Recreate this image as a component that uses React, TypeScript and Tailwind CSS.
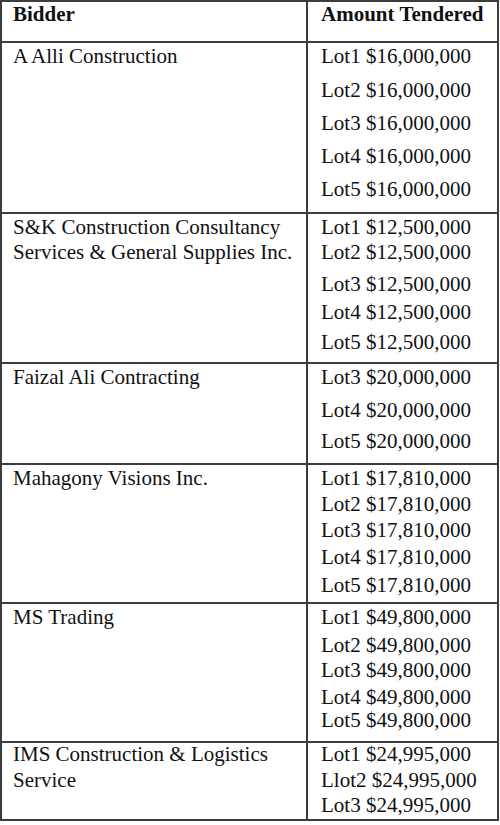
type Line = { text: string; cls: string };

type Row = {
  bidder: Line[];
  amounts: Line[];
  height: string;
};

const rows: Row[] = [
  {
    height: 'h-[171px]',
    bidder: [{ text: 'A Alli Construction', cls: 'mt-[1px]' }],
    amounts: [
      { text: 'Lot1 $16,000,000', cls: 'mt-[1px]' },
      { text: 'Lot2 $16,000,000', cls: 'mt-[10px]' },
      { text: 'Lot3 $16,000,000', cls: 'mt-[9px]' },
      { text: 'Lot4 $16,000,000', cls: 'mt-[9px]' },
      { text: 'Lot5 $16,000,000', cls: 'mt-[9px]' },
    ],
  },
  {
    height: 'h-[150px]',
    bidder: [
      { text: 'S&K Construction Consultancy', cls: 'mt-[1px]' },
      { text: 'Services & General Supplies Inc.', cls: 'mt-[1px]' },
    ],
    amounts: [
      { text: 'Lot1 $12,500,000', cls: 'mt-[1px]' },
      { text: 'Lot2 $12,500,000', cls: 'mt-[1px]' },
      { text: 'Lot3 $12,500,000', cls: 'mt-[8px]' },
      { text: 'Lot4 $12,500,000', cls: 'mt-[4px]' },
      { text: 'Lot5 $12,500,000', cls: 'mt-[6px]' },
    ],
  },
  {
    height: 'h-[101px]',
    bidder: [{ text: 'Faizal Ali Contracting', cls: 'mt-[1px]' }],
    amounts: [
      { text: 'Lot3 $20,000,000', cls: 'mt-[1px]' },
      { text: 'Lot4 $20,000,000', cls: 'mt-[9px]' },
      { text: 'Lot5 $20,000,000', cls: 'mt-[7px]' },
    ],
  },
  {
    height: 'h-[139px]',
    bidder: [{ text: 'Mahagony Visions Inc.', cls: 'mt-[1px]' }],
    amounts: [
      { text: 'Lot1 $17,810,000', cls: 'mt-[1px]' },
      { text: 'Lot2 $17,810,000', cls: 'mt-[2px]' },
      { text: 'Lot3 $17,810,000', cls: 'mt-[2px]' },
      { text: 'Lot4 $17,810,000', cls: 'mt-[3px]' },
      { text: 'Lot5 $17,810,000', cls: 'mt-[4px]' },
    ],
  },
  {
    height: 'h-[139px]',
    bidder: [{ text: 'MS Trading', cls: 'mt-[1px]' }],
    amounts: [
      { text: 'Lot1 $49,800,000', cls: 'mt-[1px]' },
      { text: 'Lot2 $49,800,000', cls: 'mt-[4px]' },
      { text: 'Lot3 $49,800,000', cls: 'mt-[1px]' },
      { text: 'Lot4 $49,800,000', cls: 'mt-[3px]' },
      { text: 'Lot5 $49,800,000', cls: 'mt-[-1px]' },
    ],
  },
  {
    height: 'h-[78px]',
    bidder: [
      { text: 'IMS Construction & Logistics', cls: 'mt-[-1px]' },
      { text: 'Service', cls: 'mt-[2px]' },
    ],
    amounts: [
      { text: 'Lot1 $24,995,000', cls: 'mt-[-1px]' },
      { text: 'Llot2 $24,995,000', cls: 'mt-[2px]' },
      { text: 'Lot3 $24,995,000', cls: 'mt-[1px]' },
    ],
  },
];

function Cell({ lines, left }: { lines: Line[]; left?: boolean }) {
  return (
    <div
      className={
        left
          ? 'pl-[11px] pr-1 border-r-2 border-[#3c3c3c] overflow-hidden'
          : 'pl-[13px] pr-1 overflow-hidden'
      }
    >
      {lines.map((line) => (
        <div key={line.text} className={`leading-[24px] whitespace-nowrap ${line.cls}`}>
          {line.text}
        </div>
      ))}
    </div>
  );
}

export default function App() {
  return (
    <div className="w-[500px] h-[825px] bg-white text-[#111] font-['Liberation_Serif','Times_New_Roman',serif] text-[21px]">
      <div className="w-[499px] border-2 border-[#3c3c3c]">
        <div className="grid grid-cols-[306px_1fr] h-[39px] font-bold text-[21px]">
          <div className="pl-[11px] border-r-2 border-[#3c3c3c] leading-[24px]">Bidder</div>
          <div className="pl-[13px] leading-[24px]">Amount Tendered</div>
        </div>
        {rows.map((row) => (
          <div
            key={row.bidder[0].text}
            className={`grid grid-cols-[306px_1fr] border-t-2 border-[#3c3c3c] ${row.height}`}
          >
            <Cell lines={row.bidder} left />
            <Cell lines={row.amounts} />
          </div>
        ))}
      </div>
    </div>
  );
}
